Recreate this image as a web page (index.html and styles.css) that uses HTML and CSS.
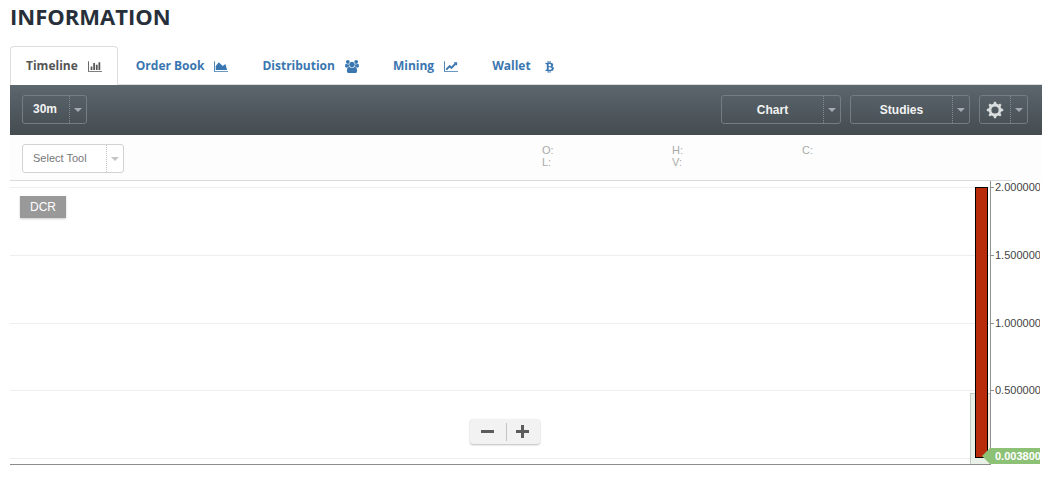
FILE: index.html
```html
<!DOCTYPE html>
<html lang="en">
<head>
<meta charset="utf-8">
<title>Information</title>
<link rel="stylesheet" href="styles.css">
</head>
<body>
<main class="page">
  <h1 class="title">INFORMATION</h1>
  <nav class="tabs">
    <a class="tab tab-active" href="#timeline">Timeline
      <svg class="icon" width="14" height="13" viewBox="0 0 2048 1792"><path d="M640 896v512h-256v-512h256zm384-512v1024h-256v-1024h256zm1024 1152v128h-2048v-1536h128v1408h1920zm-640-896v768h-256v-768h256zm384-384v1152h-256v-1152h256z"/></svg></a>
    <a class="tab" href="#orders">Order Book
      <svg class="icon" width="14" height="13" viewBox="0 0 2048 1792"><path d="M2048 1536v128h-2048v-1536h128v1408h1920zm-384-1024l256 896h-1664v-576l448-576 576 576z"/></svg></a>
    <a class="tab" href="#distribution">Distribution
      <svg class="icon" width="14" height="13" viewBox="0 0 1920 1792"><path d="M593 896q-162 5-265 128h-134q-82 0-138-40.500t-56-118.500q0-353 124-353 6 0 43.500 21t97.500 42.500 119 21.500q67 0 133-23-5 37-5 66 0 139 81 256zm1071 637q0 120-73 189.500t-194 69.500h-874q-121 0-194-69.500t-73-189.500q0-53 3.500-103.500t14-109 26.500-108.500 43-97.500 62-81 85.500-53.500 111.500-20q10 0 43 21.500t73 48 107 48 135 21.500 135-21.500 107-48 73-48 43-21.500q61 0 111.500 20t85.500 53.500 62 81 43 97.500 26.500 108.500 14 109 3.500 103.500zm-1024-1277q0 106-75 181t-181 75-181-75-75-181 75-181 181-75 181 75 75 181zm704 384q0 159-112.500 271.500t-271.500 112.500-271.500-112.500-112.500-271.500 112.500-271.500 271.500-112.500 271.500 112.500 112.500 271.500zm576 225q0 78-56 118.500t-138 40.500h-134q-103-123-265-128 81-117 81-256 0-29-5-66 66 23 133 23 59 0 119-21.500t97.500-42.500 43.500-21q124 0 124 353zm-128-609q0 106-75 181t-181 75-181-75-75-181 75-181 181-75 181 75 75 181z"/></svg></a>
    <a class="tab" href="#mining">Mining
      <svg class="icon" width="14" height="13" viewBox="0 0 2048 1792"><path d="M2048 1536v128h-2048v-1536h128v1408h1920zm-128-1248v435q0 21-19.500 29.500t-35.500-7.500l-121-121-633 633q-10 10-23 10t-23-10l-233-233-416 416-192-192 585-585q10-10 23-10t23 10l233 233 464-464-121-121q-16-16-7.500-35.500t29.500-19.500h435q14 0 23 9t9 23z"/></svg></a>
    <a class="tab" href="#wallet">Wallet
      <svg class="icon icon-narrow" width="9" height="13" viewBox="0 0 1280 1792"><path d="M1167 640q18 182-131 258 117 28 175 103t45 214q-7 71-32.500 125t-64.500 89-97 58.500-121.500 34.500-145.500 15v255h-154v-251q-80 0-122-1v252h-154v-255q-18 0-54-.5t-55-.5h-200l31-183h111q50 0 58-51v-402h16q-6-1-16-1v-287q-13-68-89-68h-111v-164l212 1q64 0 97-1v-252h154v247q82-2 122-2v-245h154v252q79 7 140 22.500t113 45 82.500 78 36.500 114.500zm-215 545q0-36-15-64t-37-46-57.500-30.500-65.500-18.500-74-9-69-3-64.500 1-47.500 1v338q8 0 37 .5t48 .5 53-1.500 58.500-4 57-8.500 55.500-14 47.500-21 39.500-30 24.500-40 9.500-51zm-71-476q0-33-12.500-58.500t-30.500-42-48-28-55-16.500-61.500-8-58-2.500-54 1-39.500.5v307q5 0 34.500.5t46.500 0 50-2 55-5.500 51.500-11 48.500-18.500 37-27 27-38.500 9-51z"/></svg></a>
  </nav>

  <div class="toolbar">
    <div class="drop drop-dark drop-period">
      <select class="drop-select" aria-label="Period"><option>30m</option><option>1h</option></select>
      <span class="drop-arrow"></span>
    </div>
    <div class="toolbar-right">
      <button class="drop drop-dark drop-wide" type="button" aria-haspopup="menu"><span class="drop-label">Chart</span><span class="drop-arrow"></span></button>
      <button class="drop drop-dark drop-wide" type="button" aria-haspopup="menu"><span class="drop-label">Studies</span><span class="drop-arrow"></span></button>
      <button class="drop drop-dark drop-gear" type="button" aria-haspopup="menu" aria-label="Settings"><span class="drop-label"><svg class="gear" width="18" height="18" viewBox="0 0 18 18"><circle cx="9" cy="9" r="5" fill="none" stroke="currentColor" stroke-width="2.800"/><g fill="currentColor"><path id="tooth" d="M7.300 3.500L8 .8h2l.7 2.700z"/><use href="#tooth" transform="rotate(45 9 9)"/><use href="#tooth" transform="rotate(90 9 9)"/><use href="#tooth" transform="rotate(135 9 9)"/><use href="#tooth" transform="rotate(180 9 9)"/><use href="#tooth" transform="rotate(225 9 9)"/><use href="#tooth" transform="rotate(270 9 9)"/><use href="#tooth" transform="rotate(315 9 9)"/></g></svg></span><span class="drop-arrow"></span></button>
    </div>
  </div>

  <div class="subbar">
    <div class="drop drop-light">
      <select class="drop-select" aria-label="Drawing tool"><option>Select Tool</option></select>
      <span class="drop-arrow"></span>
    </div>
    <div class="readout">
      <span>O:</span><span>H:</span><span>C:</span>
      <span>L:</span><span>V:</span>
    </div>
  </div>

  <section class="chart" aria-label="DCR price chart">
    <svg class="plot" height="285" viewBox="0 0 100 285" preserveAspectRatio="none" shape-rendering="crispEdges">
      <path d="M0 .5H100" stroke="#d8dadb"/>
      <path d="M0 7.500H100M0 75.500H100M0 143.500H100M0 210.500H100M0 278.500H100" stroke="#eeeeee"/>
      <path d="M0 284.500H100" stroke="#8c8c8c"/>
    </svg>
    <svg class="axis" width="70" height="290" viewBox="0 0 70 290">
      <g shape-rendering="crispEdges">
        <rect x="0" y="213" width="20" height="71" fill="#e8f0e8"/>
        <rect x="18" y="213" width="2" height="71" fill="#f7ecdd"/>
        <path d="M0 .5H42" stroke="#d8dadb"/>
        <path d="M0 7.500H20M0 75.500H20M0 143.500H20M0 210.500H20" stroke="#eeeeee"/>
        <path d="M.5 284V213.500H20" fill="none" stroke="#c2ccc2"/>
        <path d="M0 284.500H20" stroke="#8c8c8c"/>
        <rect x="5.500" y="7.500" width="12" height="270" fill="#b82c0c" stroke="#000"/>
        <path d="M20.500 1V285M20 7.500H24M20 75.500H24M20 143.500H24M20 210.500H24" stroke="#8f9193"/>
      </g>
      <path d="M12 276L20 268H70V284H20Z" fill="#8cc176"/>
      <g class="axis-labels">
        <text x="25" y="11">2.000000</text>
        <text x="25" y="79">1.500000</text>
        <text x="25" y="147">1.000000</text>
        <text x="25" y="214">0.500000</text>
        <text class="axis-current" x="25" y="280">0.003800</text>
      </g>
    </svg>
    <span class="symbol">DCR</span>
    <div class="zoom">
      <button class="zoom-btn" type="button" aria-label="Zoom out"><svg width="13" height="13"><path d="M0 5h13v3H0z"/></svg></button>
      <button class="zoom-btn" type="button" aria-label="Zoom in"><svg width="13" height="13"><path d="M0 5h5V0h3v5h5v3H8v5H5V8H0z"/></svg></button>
    </div>
  </section>
</main>
</body>
</html>
```

FILE: styles.css
```css
* { box-sizing: border-box; }
body {
  margin: 0;
  background: #fff;
  font-family: "Liberation Sans", Arial, sans-serif;
  font-size: 11px;
}
button, select { font: inherit; color: inherit; }
.page { padding: 1px 17px 0 10px; }

.title {
  margin: 0 0 15px;
  font: 700 22px/30px "Open Sans", sans-serif;
  color: #27303a;
}

.tabs {
  display: flex;
  gap: 2px;
  border-bottom: 1px solid #ddd;
  font: 700 12px/18px "Open Sans", sans-serif;
}
.tab {
  display: flex;
  align-items: center;
  gap: 10px;
  height: 38px;
  padding: 2px 15px 0;
  border: 1px solid transparent;
  color: #3a76b0;
  text-decoration: none;
}
.tab-active {
  height: 39px;
  margin-bottom: -1px;
  padding-bottom: 1px;
  border-color: #ddd;
  border-bottom-color: #fff;
  border-radius: 4px 4px 0 0;
  background: #fff;
  color: #555;
}
.icon { fill: currentColor; }
.icon-narrow { margin-left: 4px; }

.toolbar {
  display: flex;
  justify-content: space-between;
  align-items: flex-start;
  height: 50px;
  padding: 10px 14px 0 12px;
  background: linear-gradient(#5c666d, #444c50);
}
.toolbar-right { display: flex; gap: 9px; }

.drop {
  display: flex;
  height: 29px;
  padding: 0;
  border: 1px solid;
  border-radius: 3px;
}
.drop-dark {
  border-color: #747d82;
  background: transparent;
  color: #f2f3f3;
  font-size: 12px;
  font-weight: 700;
}
.drop-light {
  width: 102px;
  border-color: #d2d2d2;
  background: #fff;
  color: #777;
}
.drop-period { width: 65px; }
.drop-wide { width: 120px; }
.drop-gear { width: 49px; }
.drop-label {
  display: flex;
  flex: 1;
  align-self: stretch;
  align-items: center;
  justify-content: center;
}
.drop-select {
  flex: 1;
  min-width: 0;
  padding: 0 0 1px 10px;
  border: 0;
  background: transparent;
  appearance: none;
}
.drop-arrow {
  display: flex;
  align-self: stretch;
  align-items: center;
  justify-content: center;
  width: 17px;
  border-left: 1px dotted #848c90;
}
.drop-light .drop-arrow { border-color: #c4c4c4; }
.drop-arrow::before {
  content: "";
  border: 4px solid transparent;
  border-top-color: #a5abae;
  border-bottom: 0;
}
.drop-light .drop-arrow::before { border-top-color: #c4c4c4; }
.gear { color: #dadddd; }

.subbar {
  display: flex;
  justify-content: space-between;
  height: 45px;
  padding: 9px 110px 0 12px;
  background: #fdfdfd;
}
.readout {
  display: grid;
  grid-template-columns: repeat(3, 130px);
  align-content: start;
  line-height: 12px;
  color: #aaa;
}

.chart {
  display: grid;
  grid-template-columns: 1fr 72px;
  align-items: start;
  position: relative;
}
.plot { display: block; width: 100%; }
.axis { display: block; overflow: hidden; }
.axis-labels { font-size: 11px; fill: #444; }
.axis-current { fill: #fff; font-weight: 700; }
.symbol {
  position: absolute;
  top: 16px;
  left: 10px;
  padding: 0 10px;
  background: #999;
  box-shadow: 0 1px 2px #ccc;
  color: #fff;
  font-size: 12px;
  line-height: 22px;
}
.zoom {
  display: flex;
  position: absolute;
  top: 239px;
  left: calc(50% - 56px);
  border-radius: 3px;
  background: #f2f2f2;
  box-shadow: 0 1px 2px #bbb;
}
.zoom-btn {
  display: grid;
  place-items: center;
  width: 35px;
  height: 25px;
  padding: 0;
  border: 0;
  background: transparent;
  fill: #5c5c5c;
}
.zoom-btn + .zoom-btn {
  background: linear-gradient(#c4c4c4, #c4c4c4) 1px center / 1px 18px no-repeat;
}
```
